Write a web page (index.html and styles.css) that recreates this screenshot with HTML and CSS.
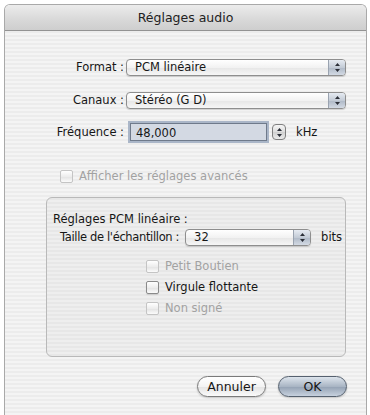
FILE: index.html
```html
<!DOCTYPE html>
<html>
<head>
    <meta charset="UTF-8">
    <title>Réglages audio</title>
    <link rel="stylesheet" href="styles.css">
</head>
<body>
    <div class="window">
        <div class="titlebar">Réglages audio</div>
        <div class="content">
            <div class="row first">
                <div class="label">Format :</div>
                <div class="popup wide">
                    <span class="popup-text">PCM linéaire</span>
                    <span class="popup-arrows">
                        <svg width="7" height="11" viewBox="0 0 7 11"><path d="M3.5 1 L6 4 L1 4 Z M3.5 10 L6 7 L1 7 Z" fill="#2b2f38"/></svg>
                    </span>
                </div>
            </div>
            <div class="row">
                <div class="label">Canaux :</div>
                <div class="popup wide">
                    <span class="popup-text">Stéréo (G D)</span>
                    <span class="popup-arrows">
                        <svg width="7" height="11" viewBox="0 0 7 11"><path d="M3.5 1 L6 4 L1 4 Z M3.5 10 L6 7 L1 7 Z" fill="#2b2f38"/></svg>
                    </span>
                </div>
            </div>
            <div class="row freq">
                <div class="label">Fréquence :</div>
                <div class="field">48,000</div>
                <div class="stepper">
                    <svg width="7" height="11" viewBox="0 0 7 11"><path d="M3.5 1 L6 4 L1 4 Z M3.5 10 L6 7 L1 7 Z" fill="#2b2f38"/></svg>
                </div>
                <div class="unit">kHz</div>
            </div>
            <div class="check-row advanced disabled">
                <span class="checkbox"></span>
                <span>Afficher les réglages avancés</span>
            </div>
            <div class="group">
                <div class="group-title">Réglages PCM linéaire :</div>
                <div class="row sample">
                    <div class="label">Taille de l'échantillon :</div>
                    <div class="popup small">
                        <span class="popup-text">32</span>
                        <span class="popup-arrows">
                            <svg width="7" height="11" viewBox="0 0 7 11"><path d="M3.5 1 L6 4 L1 4 Z M3.5 10 L6 7 L1 7 Z" fill="#2b2f38"/></svg>
                        </span>
                    </div>
                    <div class="unit">bits</div>
                </div>
                <div class="checks">
                    <div class="check-row disabled">
                        <span class="checkbox"></span>
                        <span>Petit Boutien</span>
                    </div>
                    <div class="check-row">
                        <span class="checkbox"></span>
                        <span>Virgule flottante</span>
                    </div>
                    <div class="check-row disabled">
                        <span class="checkbox"></span>
                        <span>Non signé</span>
                    </div>
                </div>
            </div>
            <div class="buttons">
                <div class="button">Annuler</div>
                <div class="button default">OK</div>
            </div>
        </div>
    </div>
</body>
</html>
```

FILE: styles.css
```css
body {
    margin: 0;
    background: white;
    font-family: "DejaVu Sans", "Liberation Sans", sans-serif;
    font-size: 11.5px;
    color: #161616;
}
.window {
    margin: 4px 3px 0 4px;
    height: 411px;
    border: 1px solid #a9a9a9;
    border-bottom: none;
    border-radius: 6px 6px 0 0;
    overflow: hidden;
    box-sizing: border-box;
}
.titlebar {
    height: 25px;
    line-height: 25px;
    text-align: center;
    font-size: 12.5px;
    color: #222;
    background: linear-gradient(#ececec, #d8d8d8 60%, #cecece);
    border-bottom: 1px solid #939393;
}
.content {
    height: 385px;
    padding: 27px 0 0 0;
    box-sizing: border-box;
    background: repeating-linear-gradient(#ececec 0px, #ececec 2px, #f4f4f4 2px, #f4f4f4 4px);
}
.row {
    display: flex;
    align-items: center;
    height: 18px;
    margin-top: 15px;
}
.row.first {
    margin-top: 0;
}
.label {
    width: 119px;
    text-align: right;
    margin-right: 2px;
    white-space: nowrap;
}
.popup {
    display: flex;
    height: 17px;
    border: 1px solid #8e8e8e;
    border-radius: 4px;
    background: linear-gradient(#ffffff, #f2f2f2 50%, #e6e6e6 51%, #f6f6f6);
    box-sizing: border-box;
    box-shadow: 0 1px 1px rgba(0, 0, 0, 0.15);
    overflow: hidden;
}
.popup.wide {
    width: 220px;
}
.popup.small {
    width: 126px;
}
.popup-text {
    flex: 1;
    padding-left: 8px;
    line-height: 15px;
}
.popup-arrows {
    width: 16px;
    display: flex;
    align-items: center;
    justify-content: center;
    border-left: 1px solid #9aa3b0;
    background: linear-gradient(#e6ebf2, #c3cbd6 50%, #aeb8c6 51%, #d3dae4);
}
.freq {
    margin-top: 14px;
}
.field {
    width: 137px;
    height: 18px;
    margin-left: 4px;
    padding-left: 5px;
    line-height: 18px;
    box-sizing: border-box;
    background: #d3d9e3;
    border: 1px solid #6f7a8b;
    box-shadow: 0 0 0 2px #aab6c8;
}
.stepper {
    width: 14px;
    height: 16px;
    margin-left: 5px;
    display: flex;
    align-items: center;
    justify-content: center;
    border: 1px solid #7f7f7f;
    border-radius: 4px;
    background: linear-gradient(#f6f6f6, #dcdcdc 50%, #cfcfcf 51%, #ececec);
    box-sizing: border-box;
}
.unit {
    margin-left: 10px;
}
.check-row {
    display: flex;
    align-items: center;
    height: 16px;
}
.checkbox {
    width: 13px;
    height: 13px;
    margin-right: 6px;
    border: 1px solid #8a8a8a;
    border-radius: 2px;
    background: linear-gradient(#ffffff, #ededed 50%, #e2e2e2 51%, #fbfbfb);
    box-sizing: border-box;
    box-shadow: 0 1px 1px rgba(0, 0, 0, 0.12);
}
.disabled {
    color: #a2a2a2;
}
.disabled .checkbox {
    border-color: #c4c4c4;
    box-shadow: none;
}
.advanced {
    margin-top: 27px;
    padding-left: 55px;
}
.group {
    margin: 13px 0 0 41px;
    width: 300px;
    height: 160px;
    box-sizing: border-box;
    border: 1px solid #b9b9b9;
    border-radius: 6px;
    background: repeating-linear-gradient(#e7e7e7 0px, #e7e7e7 2px, #eeeeee 2px, #eeeeee 4px);
    padding: 13px 0 0 6px;
}
.group-title {
    height: 16px;
    line-height: 16px;
}
.sample {
    margin-top: 1px;
}
.sample .label {
    width: auto;
    padding-left: 7px;
    margin-right: 6px;
    letter-spacing: -0.35px;
}
.checks {
    margin: 12px 0 0 93px;
    display: flex;
    flex-direction: column;
    gap: 5px;
}
.buttons {
    display: flex;
    justify-content: flex-end;
    gap: 12px;
    margin: 19px 19px 0 0;
}
.button {
    width: 69px;
    height: 21px;
    line-height: 19px;
    text-align: center;
    font-size: 12.5px;
    box-sizing: border-box;
    border: 1px solid #7a7a7a;
    border-radius: 11px;
    background: linear-gradient(#ffffff, #f3f3f3 50%, #e3e3e3 51%, #fafafa);
    box-shadow: 0 1px 2px rgba(0, 0, 0, 0.2);
}
.button.default {
    border-color: #55606e;
    background: linear-gradient(#dde4ec, #a9b5c4 50%, #93a1b3 51%, #c7d1de);
}
```
